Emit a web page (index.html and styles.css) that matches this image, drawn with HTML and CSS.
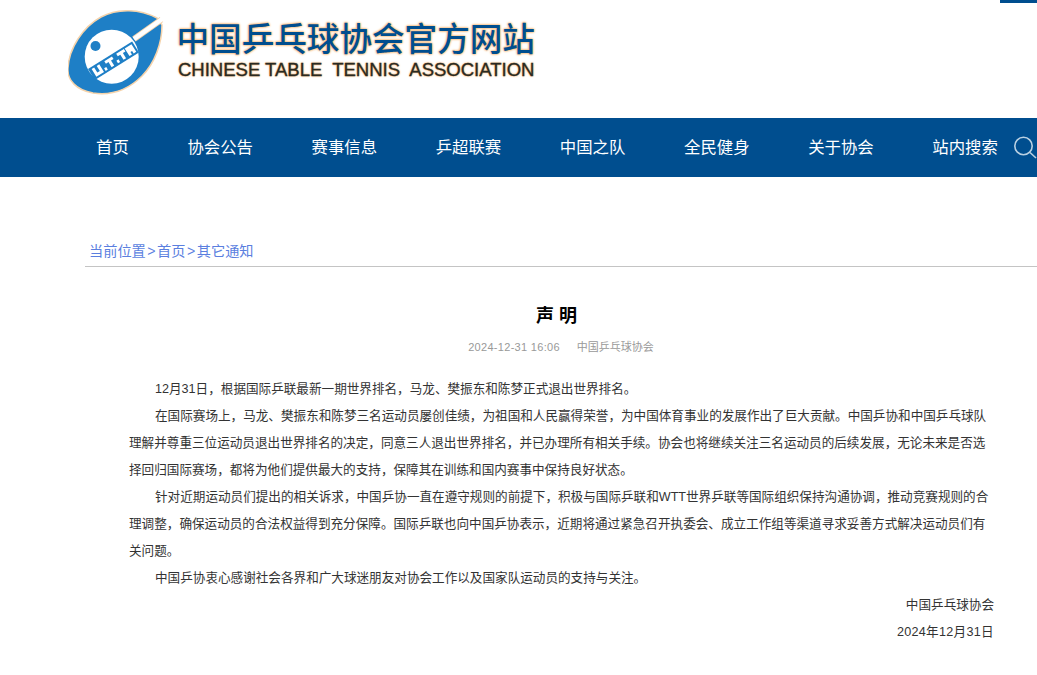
FILE: index.html
```html
<!DOCTYPE html>
<html lang="zh-CN">
  <head>
    <meta charset="UTF-8" />
    <meta name="viewport" content="width=device-width, initial-scale=1.0" />
    <title>声明 - 中国乒乓球协会官方网站</title>
    <link rel="stylesheet" href="styles.css">
  </head>
  <body>
    <div class="corner-tab"></div>
    <header class="header">
      <svg class="logo-mark" width="100" height="88" viewBox="0 0 100 88">
        <path d="M89 8 C72 -1 50 -2 33 7 C15 17 1 38 0 58 C-1 70 8 80 25 83 C45 86 62 78 74 66 C87 53 94 33 94 15 Z" fill="#1e7fc6" stroke="#f5d3ab" stroke-width="1.5"/>
        <path d="M93.500 9.500 L66 29" stroke="#f5d3ab" stroke-width="6" fill="none"/>
        <path d="M97 7 L66 29" stroke="#fff" stroke-width="4.500" fill="none"/>
        <circle cx="43.700" cy="46.700" r="27" fill="#fff"/>
        <circle cx="27.500" cy="36" r="5" fill="#1e7fc6"/>
        <g transform="translate(20 59) rotate(-32)">
          <rect width="52" height="13" fill="#1e7fc6"/>
          <path d="M3 2h3v6h3v-6h3v9h-9z" fill="#fff"/>
          <rect x="14" y="8" width="2.500" height="3" fill="#fff"/>
          <path d="M18 2h9v3h-3v6h-3v-6h-3z" fill="#fff"/>
          <rect x="28.500" y="8" width="2.500" height="3" fill="#fff"/>
          <path d="M32 2h9v3h-3v6h-3v-6h-3z" fill="#fff"/>
          <path d="M42 11v-9h8v9h-3v-3h-2v3z" fill="#fff"/>
        </g>
      </svg>
      <div class="logo-text">
        <div class="logo-cn">中国乒乓球协会官方网站</div>
        <div class="logo-en">CHINESE TABLE&nbsp; TENNIS&nbsp; ASSOCIATION</div>
      </div>
    </header>

    <nav class="nav">
      <a href="#">首页</a>
      <a href="#">协会公告</a>
      <a href="#">赛事信息</a>
      <a href="#">乒超联赛</a>
      <a href="#">中国之队</a>
      <a href="#">全民健身</a>
      <a href="#">关于协会</a>
      <a href="#">站内搜索</a>
      <svg class="search-icon" width="24" height="24" viewBox="0 0 24 24" fill="none" stroke="#b9d0e2" stroke-width="1.6">
        <circle cx="10.500" cy="10" r="8.700"/>
        <path d="M17 16.500 L23 22"/>
      </svg>
    </nav>

    <main class="main">
      <div class="crumb">
        <a href="#">当前位置</a><span class="sep">&gt;</span><a href="#">首页</a><span class="sep">&gt;</span><a href="#">其它通知</a>
      </div>
      <h1 class="title">声 明</h1>
      <div class="meta">
        <span class="date">2024-12-31 16:06</span>
        <span>中国乒乓球协会</span>
      </div>
      <article class="content">
        <p>12月31日，根据国际乒联最新一期世界排名，马龙、樊振东和陈梦正式退出世界排名。</p>
        <p>在国际赛场上，马龙、樊振东和陈梦三名运动员屡创佳绩，为祖国和人民赢得荣誉，为中国体育事业的发展作出了巨大贡献。中国乒协和中国乒乓球队理解并尊重三位运动员退出世界排名的决定，同意三人退出世界排名，并已办理所有相关手续。协会也将继续关注三名运动员的后续发展，无论未来是否选择回归国际赛场，都将为他们提供最大的支持，保障其在训练和国内赛事中保持良好状态。</p>
        <p>针对近期运动员们提出的相关诉求，中国乒协一直在遵守规则的前提下，积极与国际乒联和WTT世界乒联等国际组织保持沟通协调，推动竞赛规则的合理调整，确保运动员的合法权益得到充分保障。国际乒联也向中国乒协表示，近期将通过紧急召开执委会、成立工作组等渠道寻求妥善方式解决运动员们有关问题。</p>
        <p>中国乒协衷心感谢社会各界和广大球迷朋友对协会工作以及国家队运动员的支持与关注。</p>
        <p class="sign">中国乒乓球协会</p>
        <p class="sign sign-date">2024年12月31日</p>
      </article>
    </main>
  </body>
</html>
```

FILE: styles.css
```css
* {
  box-sizing: border-box;
}
body {
  margin: 0;
  font-family: "Liberation Sans", "Noto Sans CJK SC", sans-serif;
  background: white;
  color: #333;
  overflow: hidden;
}
a {
  color: inherit;
  text-decoration: none;
}
.corner-tab {
  position: absolute;
  top: 0;
  right: 0;
  width: 37px;
  height: 3px;
  background: #004e8f;
}
.header {
  height: 118px;
  padding: 10px 0 0 68px;
  display: flex;
  align-items: flex-start;
}
.logo-mark {
  flex: none;
}
.logo-text {
  margin: 11px 0 0 10px;
}
.logo-cn {
  margin-left: -1.5px;
  font-size: 32.6px;
  line-height: 38px;
  font-weight: 500;
  color: #004e8f;
  text-shadow: 0 0 2px #f7b877, 0 0 2px #f7b877, 0 0 3px #f7c68f;
}
.logo-en {
  font-size: 18.5px;
  line-height: 22px;
  color: #2a2a22;
  white-space: nowrap;
  -webkit-text-stroke: 0.3px #2a2a22;
  text-shadow: 0 0 2px #f7b877, 0 0 2px #f7b877;
}
.nav {
  height: 59px;
  padding: 0 0 4px 96px;
  background: #004e8f;
  display: flex;
  align-items: center;
  gap: 58.6px;
  font-size: 16.4px;
  color: white;
  white-space: nowrap;
}
.nav a {
  flex: none;
}
.search-icon {
  flex: none;
  margin: 4px 0 0 -43.6px;
}
.main {
  padding: 65px 0 0 85px;
  width: 1037px;
}
.crumb {
  height: 25px;
  padding-left: 4px;
  font-size: 14.2px;
  line-height: 18px;
  color: #5b7fdf;
  border-bottom: 1px solid #c4c4c4;
}
.sep {
  padding: 0 1.5px;
}
.title {
  margin: 37px 0 0;
  padding-right: 9px;
  text-align: center;
  font-size: 18px;
  line-height: 24px;
  font-weight: bold;
  color: #000;
}
.meta {
  margin-top: 11px;
  display: flex;
  justify-content: center;
  gap: 17px;
  font-size: 11px;
  line-height: 16px;
  color: #999;
}
.date {
  letter-spacing: 0.3px;
}
.content {
  margin-top: 21px;
  padding: 0 43px 0 44px;
  font-size: 12.6px;
  line-height: 27px;
  color: #333;
}
.content p {
  margin: 0;
  text-indent: 26px;
}
.content .sign {
  text-align: right;
  text-indent: 0;
}
.content .sign-date {
  letter-spacing: 0.3px;
}
```
